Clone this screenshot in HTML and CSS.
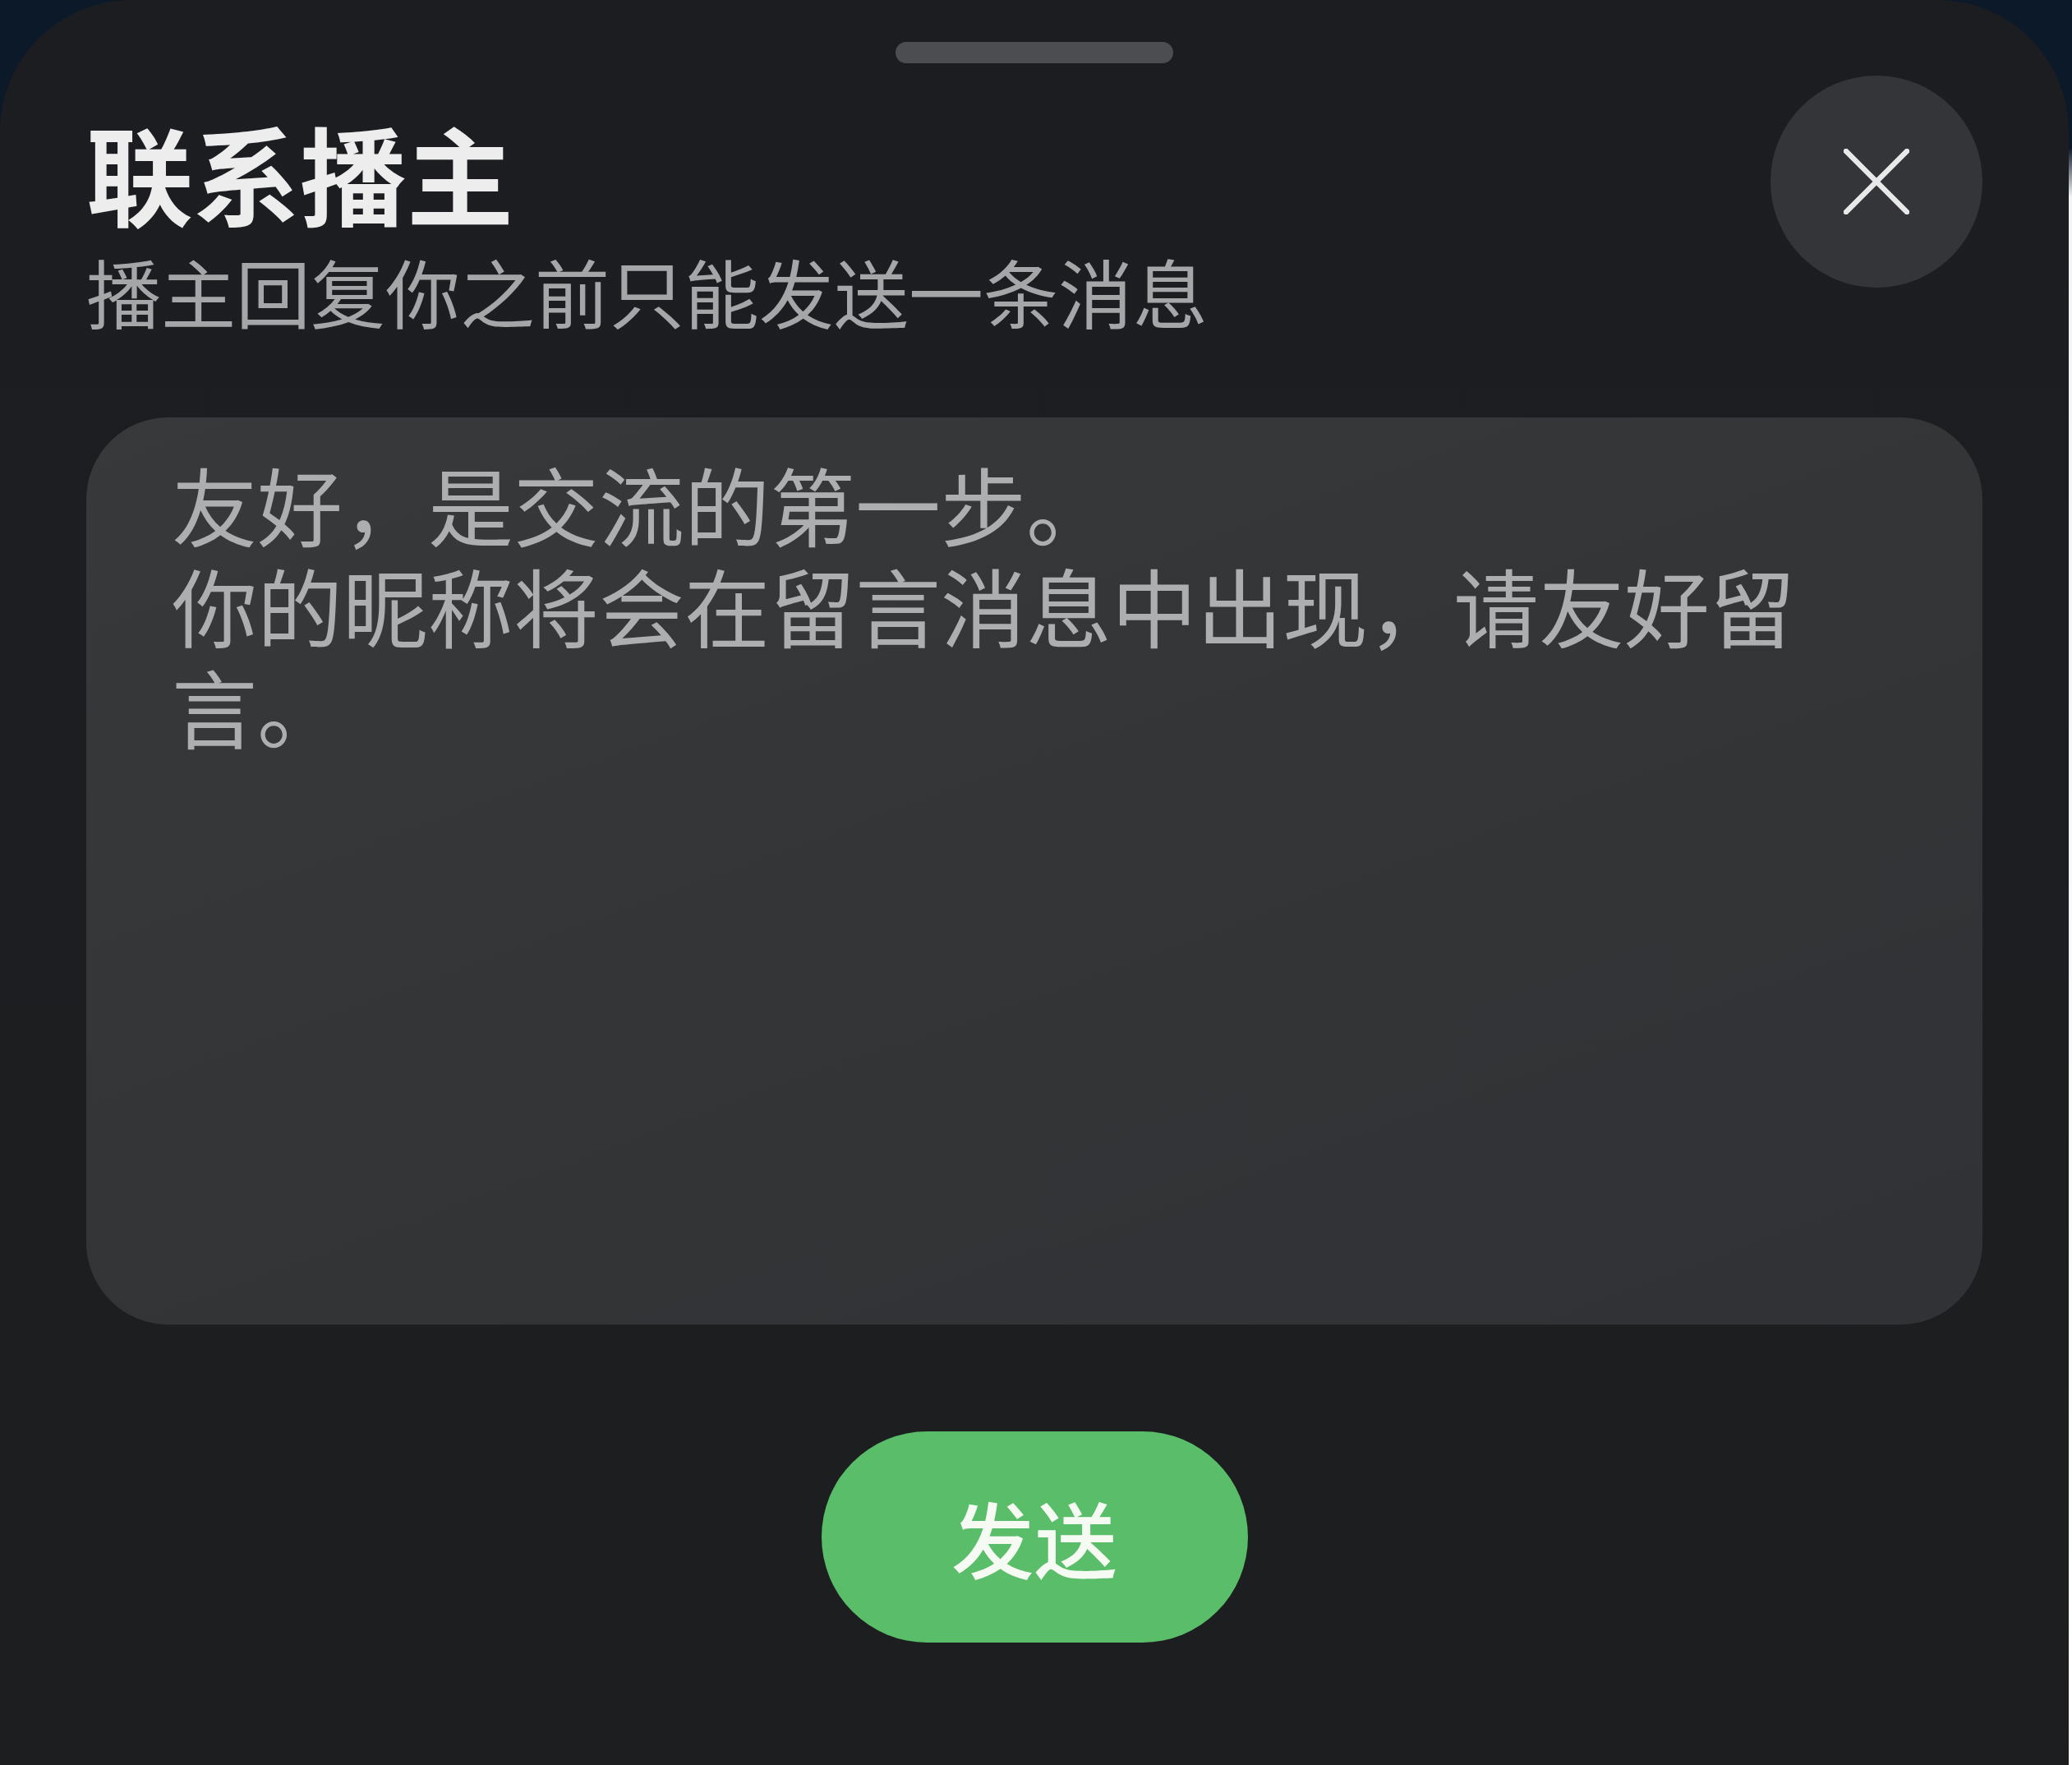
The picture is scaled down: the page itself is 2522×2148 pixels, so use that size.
FILE: index.html
```html
<!DOCTYPE html>
<html lang="zh-CN">
<head>
<meta charset="utf-8">
<title>联系播主</title>
<link rel="stylesheet" href="styles.css">
</head>
<body>
<div class="page">
  <section class="sheet">
    <div class="handle"></div>
    <header class="header">
      <div class="heading">
        <h1 class="title">联系播主</h1>
        <p class="subtitle">播主回复你之前只能发送一条消息</p>
      </div>
      <button class="close" type="button" aria-label="关闭">
        <svg class="close-icon" viewBox="0 0 80 80" width="80" height="80">
          <path d="M3 3 L77 77 M77 3 L3 77" stroke="#e8e8e9" stroke-width="6.5" stroke-linecap="round" fill="none"/>
        </svg>
      </button>
    </header>
    <div class="message">
      <div class="placeholder">友好，是交流的第一步。<br>你的昵称将会在留言消息中出现，请友好留言。</div>
    </div>
    <div class="actions">
      <button class="send" type="button">发送</button>
    </div>
  </section>
  <div class="edge"></div>
</div>
</body>
</html>
```

FILE: styles.css
```css
html, body {
  margin: 0;
  padding: 0;
}

body {
  width: 2522px;
  height: 2148px;
  overflow: hidden;
  background: #0c1928;
  font-family: "Noto Sans CJK SC", "Noto Sans", sans-serif;
}

.page {
  display: flex;
  width: 2522px;
  height: 2148px;
}

.sheet {
  width: 2518px;
  height: 2148px;
  box-sizing: border-box;
  padding: 0 105px;
  border-radius: 160px 160px 0 0;
  background: linear-gradient(180deg, #1b1d21 0%, #1c1e21 40%, #1c1e1f 100%);
  display: flex;
  flex-direction: column;
}

.edge {
  flex: 1;
  background: linear-gradient(180deg, #0c1928 0px, #0c1928 180px, #f3f4f5 240px, #ffffff 100%);
}

.handle {
  align-self: center;
  width: 338px;
  height: 26px;
  margin-top: 51px;
  border-radius: 13px;
  background: #4b4d50;
}

.header {
  display: flex;
  justify-content: space-between;
  align-items: flex-start;
  margin-top: 15px;
}

.heading {
  padding-top: 36px;
}

.title {
  margin: 0;
  font-size: 130px;
  line-height: 160px;
  font-weight: 700;
  color: #ededed;
  letter-spacing: 0;
}

.subtitle {
  margin: 5px 0 0;
  font-size: 91px;
  line-height: 120px;
  font-weight: 400;
  color: #a5a6a8;
}

.close {
  width: 258px;
  height: 258px;
  flex: none;
  border: none;
  padding: 0;
  border-radius: 50%;
  background: #333538;
  display: flex;
  align-items: center;
  justify-content: center;
}

.close-icon {
  display: block;
}

.message {
  margin-top: 95px;
  height: 1104px;
  box-sizing: border-box;
  padding: 43px 100px 0 104px;
  border-radius: 100px;
  background: linear-gradient(160deg, #38393b 0%, #333537 45%, #303235 100%);
}

.placeholder {
  font-size: 104px;
  line-height: 123px;
  color: #acaeb0;
}

.actions {
  display: flex;
  justify-content: center;
  margin-top: 130px;
}

.send {
  width: 519px;
  height: 257px;
  border: none;
  border-radius: 129px;
  background: #59bd69;
  color: #f5fbf3;
  font-family: "Noto Sans CJK SC", "Noto Sans", sans-serif;
  font-size: 101px;
  font-weight: 500;
  line-height: 1;
  display: flex;
  align-items: center;
  justify-content: center;
  padding: 0;
}
```
